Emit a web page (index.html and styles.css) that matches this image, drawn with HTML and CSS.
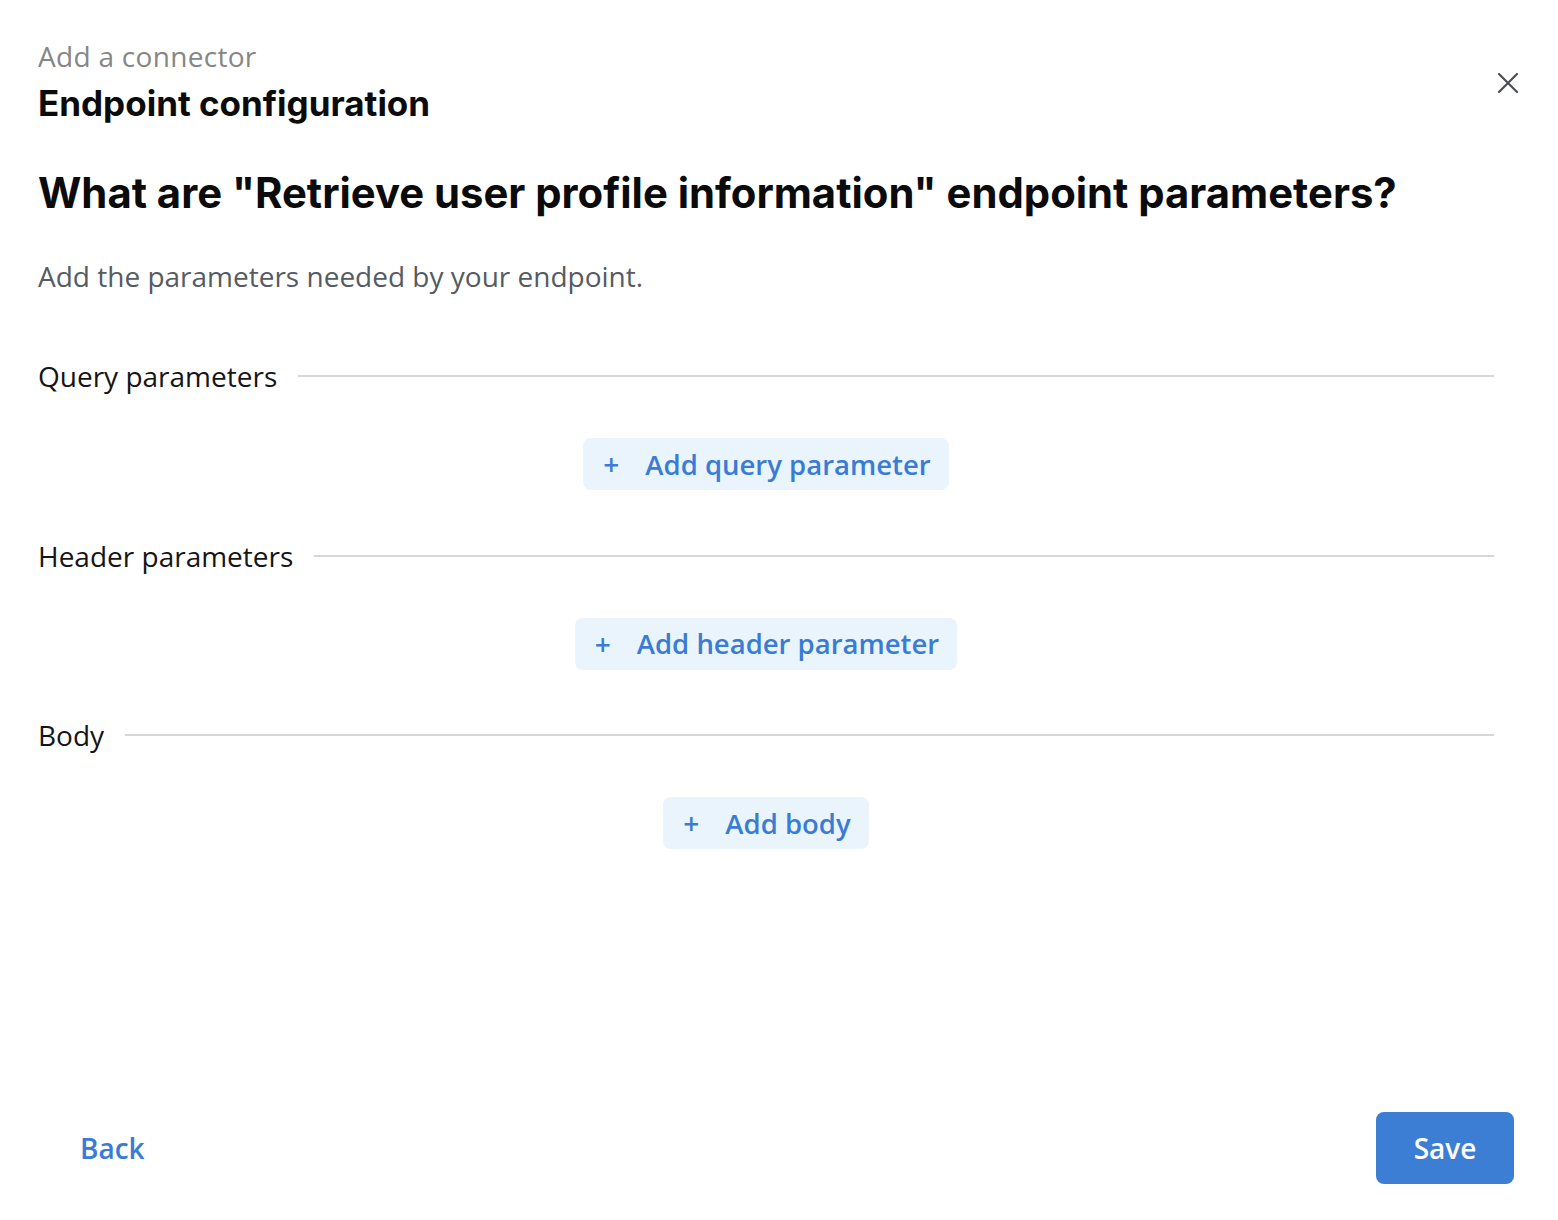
FILE: index.html
```html
<!DOCTYPE html>
<html>
<head>
<meta charset="utf-8">
<link rel="stylesheet" href="styles.css">
</head>
<body>
<div class="dialog">
  <header class="top">
    <div class="titles">
      <div class="eyebrow">Add a connector</div>
      <h1 class="title">Endpoint configuration</h1>
    </div>
    <button class="close" aria-label="Close">
      <svg width="22" height="22" viewBox="0 0 22 22"><path d="M2 2L20 20M20 2L2 20" stroke="#4a4d52" stroke-width="2.2" stroke-linecap="round"/></svg>
    </button>
  </header>
  <main class="content">
    <h2 class="question">What are "Retrieve user profile information" endpoint parameters?</h2>
    <p class="desc">Add the parameters needed by your endpoint.</p>

    <section class="section">
      <div class="section-head"><span class="label">Query parameters</span><span class="rule"></span></div>
      <div class="action"><button class="add"><span class="plus">+</span>Add query parameter</button></div>
    </section>
    <section class="section">
      <div class="section-head"><span class="label">Header parameters</span><span class="rule"></span></div>
      <div class="action"><button class="add"><span class="plus">+</span>Add header parameter</button></div>
    </section>
    <section class="section">
      <div class="section-head"><span class="label">Body</span><span class="rule"></span></div>
      <div class="action"><button class="add"><span class="plus">+</span>Add body</button></div>
    </section>
  </main>
  <footer class="footer">
    <button class="back">Back</button>
    <button class="save">Save</button>
  </footer>
</div>
</body>
</html>
```
FILE: styles.css
```css
* { box-sizing: border-box; }
html, body { margin: 0; padding: 0; background: #fff; }
body { font-family: "Open Sans", "Lato", sans-serif; color: #111; }
.dialog { width: 1558px; height: 1220px; display: flex; flex-direction: column; padding: 0 44px 36px 38px; }
.top { display: flex; justify-content: space-between; align-items: flex-start; padding-top: 39px; }
.eyebrow { font-size: 28px; color: #868686; line-height: 34px; letter-spacing: 0.3px; }
.title { font-family: "Inter", "Roboto", sans-serif; font-weight: 700; font-size: 35px; line-height: 40px; margin: 10px 0 0; color: #0b0b0b; }
.close { background: none; border: 0; padding: 0; margin: 32px -6px 0 0; width: 24px; height: 24px; display: flex; align-items: center; justify-content: center; cursor: pointer; }
.content { flex: 1; padding-right: 20px; }
.question { font-family: "Inter", "Roboto", sans-serif; font-weight: 700; font-size: 41.8px; line-height: 52px; margin: 44px 0 0; color: #0b0b0b; }
.desc { font-size: 28px; color: #555b63; margin: 40px 0 0; line-height: 34px; }
.section:first-of-type { margin-top: 66px; }
.section-head { display: flex; align-items: center; gap: 21px; height: 34px; }
.label { font-size: 28px; color: #151515; white-space: nowrap; }
.rule { flex: 1; height: 2px; background: #d5d7da; }
.action { display: flex; justify-content: center; padding: 45px 0 48.5px; }
.add { display: inline-flex; align-items: center; height: 52px; padding: 0 18px 0 20px; background: #eaf4fd; border: 0; border-radius: 8px; color: #3a7bd5; font-family: "Open Sans", sans-serif; font-size: 27.5px; font-weight: 600; cursor: pointer; }
.plus { font-size: 28px; margin-right: 26px; font-weight: 600; }
.footer { display: flex; justify-content: space-between; align-items: center; padding-left: 42px; }
.back { background: none; border: 0; color: #3a7bd5; font-family: "Open Sans", sans-serif; font-weight: 600; font-size: 28px; padding: 0; }
.save { width: 138px; height: 72px; background: #3d7ed5; color: #fff; border: 0; border-radius: 8px; font-family: "Open Sans", sans-serif; font-weight: 600; font-size: 28px; }
```
